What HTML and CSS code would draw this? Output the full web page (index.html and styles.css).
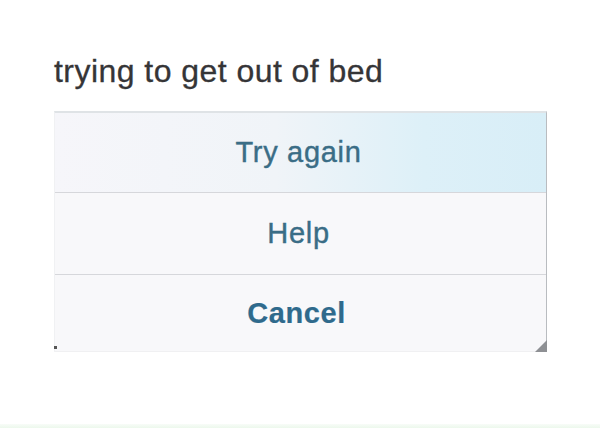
FILE: index.html
```html
<!DOCTYPE html>
<html lang="en">
<head>
    <meta charset="UTF-8">
    <meta name="viewport" content="width=device-width, initial-scale=1.0">
    <title>trying to get out of bed</title>
    <link rel="stylesheet" href="styles.css">
</head>
<body>
    <div class="meme">
        <h1 class="caption">trying to get out of bed</h1>
        <div class="alert">
            <button class="alert-btn first">Try again</button>
            <button class="alert-btn">Help</button>
            <button class="alert-btn cancel">Cancel</button>
        </div>
    </div>
    <div class="strip"></div>
</body>
</html>
```

FILE: styles.css
```css
* {
    margin: 0;
    padding: 0;
    box-sizing: border-box;
}
body {
    font-family: "Liberation Sans", Arial, Helvetica, sans-serif;
    background-color: #fff;
    width: 600px;
    height: 428px;
    display: flex;
    flex-direction: column;
    overflow: hidden;
}
.meme {
    flex: 1;
    padding: 53px 0 0 54px;
}
.caption {
    font-size: 32px;
    font-weight: normal;
    line-height: 36px;
    letter-spacing: 0.45px;
    color: #353537;
    -webkit-text-stroke: 0.3px #353537;
    margin-bottom: 22px;
}
.alert {
    position: relative;
    width: 493px;
    display: flex;
    flex-direction: column;
    background-color: #f8f8fa;
    border-top: 2px solid #dfe3e6;
    border-right: 1px solid #b9bcc0;
    border-left: 1px solid #f0f1f3;
}
.alert::after {
    content: "";
    position: absolute;
    right: -1px;
    bottom: 0;
    border-style: solid;
    border-width: 0 0 12px 12px;
    border-color: transparent transparent #8e9094 transparent;
}
.alert::before {
    content: "";
    position: absolute;
    left: -1px;
    bottom: 3px;
    width: 3px;
    height: 3px;
    background-color: #555;
}
.alert-btn {
    height: 82px;
    border: none;
    border-bottom: 1px solid #d6d7db;
    background: transparent;
    font-family: inherit;
    font-size: 29px;
    letter-spacing: 0.7px;
    color: #3a6d86;
    -webkit-text-stroke: 0.4px #3a6d86;
    padding-right: 4px;
}
.alert-btn.first {
    height: 80px;
    background: linear-gradient(90deg, #f6f6fa 0%, #f0f4f8 45%, #ddf0f8 75%, #d8eef7 100%);
}
.alert-btn.cancel {
    height: 77px;
    border-bottom: 1px solid #f0f0f2;
    font-weight: bold;
    letter-spacing: 0.6px;
    color: #2f6a8c;
    -webkit-text-stroke: 0.2px #2f6a8c;
    padding-right: 8px;
}
.strip {
    height: 4px;
    background: linear-gradient(#f8fcf8, #ecf8ec);
}
```
